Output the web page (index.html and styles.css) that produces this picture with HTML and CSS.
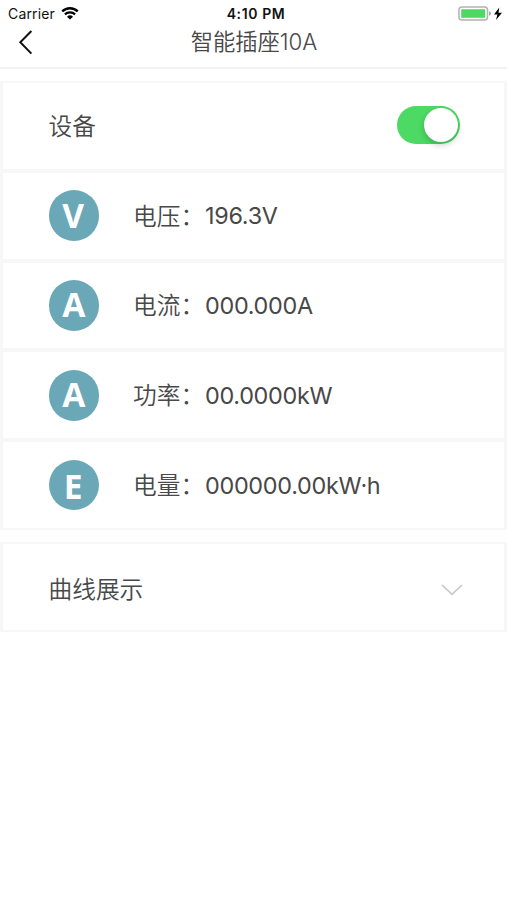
FILE: index.html
```html
<!DOCTYPE html>
<html lang="zh-CN">
<head>
  <meta charset="UTF-8" />
  <meta name="viewport" content="width=device-width, initial-scale=1.0" />
  <title>智能插座10A</title>
  <link rel="stylesheet" href="styles.css">
</head>
<body>
  <div class="status-bar">
    <div class="carrier">
      <span>Carrier</span>
      <svg class="wifi" width="18" height="13" viewBox="0 0 18 13">
        <path d="M1.2 4.4a11.2 11.2 0 0 1 15.6 0" fill="none" stroke="#000" stroke-width="2.4" />
        <path d="M3.9 7.4a7.4 7.4 0 0 1 10.2 0" fill="none" stroke="#000" stroke-width="2.2" />
        <path d="M9 12.6L6 9.7a4.3 4.3 0 0 1 6 0z" />
      </svg>
    </div>
    <div class="time">4:10 PM</div>
    <div class="battery">
      <svg width="44" height="16" viewBox="0 0 44 16">
        <rect x="1" y="1" width="28.5" height="13" rx="3" fill="#fff" stroke="#b2b2b2" stroke-width="1.5" />
        <rect x="3.2" y="3.2" width="24" height="8.6" rx="0.6" fill="#4cd964" />
        <path d="M31 5.2q2 .6 2 2.3t-2 2.3z" fill="#a6a6a6" />
        <path d="M41.3 1.6L36 8.6h3.4L38 14l6-7.3h-3.5z" />
      </svg>
    </div>
  </div>

  <div class="nav">
    <svg class="back" width="16" height="26" viewBox="0 0 16 26">
      <path d="M13.4 2L2.3 13.3l11.1 11.3" fill="none" stroke="#111" stroke-width="2" />
    </svg>
    <h1>智能插座10A</h1>
  </div>

  <div class="group">
    <div class="row">
      <span class="title">设备</span>
      <div class="switch"><div class="knob"></div></div>
    </div>
    <div class="row">
      <div class="icon voltage">V</div>
      <span class="label">电压：</span>
      <span class="value">196.3V</span>
    </div>
    <div class="row">
      <div class="icon">A</div>
      <span class="label">电流：</span>
      <span class="value">000.000A</span>
    </div>
    <div class="row">
      <div class="icon">A</div>
      <span class="label">功率：</span>
      <span class="value">00.0000kW</span>
    </div>
    <div class="row">
      <div class="icon energy">E</div>
      <span class="label">电量：</span>
      <span class="value">000000.00kW·h</span>
    </div>
  </div>

  <div class="group chart">
    <div class="row">
      <span class="title">曲线展示</span>
      <svg class="arrow" width="24" height="14" viewBox="0 0 24 14">
        <path d="M2 2l10 9.4L22 2" fill="none" stroke="#c8c8c8" stroke-width="1.7" />
      </svg>
    </div>
  </div>
</body>
</html>
```
FILE: styles.css
```css
* {
  box-sizing: border-box;
}
body {
  margin: 0;
  background: #fff;
  color: #484848;
  font-family: Inter, "Noto Sans CJK SC", sans-serif;
}
.status-bar {
  display: grid;
  grid-template-columns: 1fr auto 1fr;
  align-items: center;
  height: 27px;
  padding: 0 5px 0 8px;
  color: #111;
  font-size: 14px;
}
.carrier {
  display: flex;
  align-items: center;
  gap: 6px;
  letter-spacing: 0.15px;
}
.time {
  padding-left: 2px;
  font-weight: 600;
  letter-spacing: 0.6px;
}
.battery {
  display: flex;
  justify-content: flex-end;
}
.nav {
  display: grid;
  grid-template-columns: 40px 1fr 40px;
  align-items: center;
  height: 42px;
  padding-bottom: 11px;
  border-bottom: 2px solid #f2f2f2;
}
.back {
  margin-left: 18px;
}
h1 {
  margin: 0;
  padding-left: 1px;
  text-align: center;
  font-size: 22.3px;
  font-weight: 350;
  line-height: 28px;
}
.group {
  margin-top: 12px;
  border: solid #f7f7f7;
  border-width: 2px 3px;
}
.row {
  display: flex;
  align-items: center;
  height: 89.8px;
  padding: 0 44px 0 45.5px;
  border-bottom: 4px solid #f7f7f7;
  font-size: 23.7px;
  font-weight: 350;
}
.row:last-child {
  height: 86px;
  border-bottom: none;
}
.title,
.label {
  padding-bottom: 2px;
}
.switch {
  width: 63px;
  height: 38px;
  margin: 0 0 1px auto;
  padding: 2px;
  border-radius: 19px;
  background: #4cd964;
}
.knob {
  width: 34px;
  height: 34px;
  margin-left: auto;
  border-radius: 50%;
  background: #fff;
  box-shadow: 0 3px 6px rgba(0,0,0,0.2);
}
.icon {
  width: 50.5px;
  height: 50.5px;
  margin-right: 34px;
  border-radius: 50%;
  background: #6aa8b7;
  color: #fff;
  font-family: "Open Sans", sans-serif;
  font-size: 33.5px;
  font-weight: 700;
  line-height: 48px;
  text-align: center;
}
.voltage {
  padding-right: 1px;
  line-height: 50px;
}
.energy {
  padding-right: 1px;
  line-height: 52px;
}
.label {
  width: 72px;
  white-space: nowrap;
}
.value {
  font-size: 23.4px;
  font-weight: 400;
  letter-spacing: -0.3px;
}
.chart .row {
  padding: 3px 40px 0 45.5px;
}
.chart .arrow {
  margin-top: 3px;
  margin-left: auto;
}
```
